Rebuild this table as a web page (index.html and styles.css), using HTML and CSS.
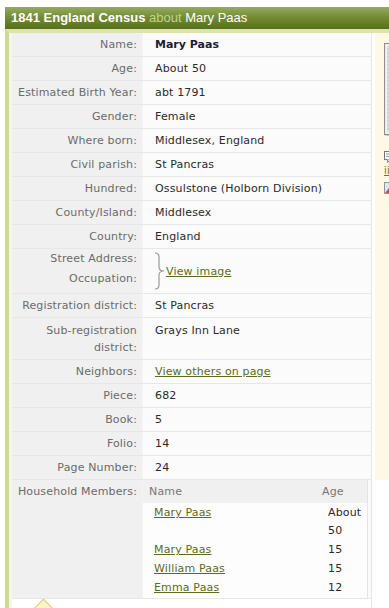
FILE: index.html
```html
<!DOCTYPE html>
<html>
<head>
<meta charset="utf-8">
<link rel="stylesheet" href="styles.css">
</head>
<body>
<div class="page">
  <div class="hdr"><b>1841 England Census</b> <span class="about">about</span> Mary Paas</div>
  <div class="frame">
    <div class="main">
      <div class="rec">
        <div class="row"><div class="lbl">Name:</div><div class="val"><strong>Mary Paas</strong></div></div>
        <div class="row"><div class="lbl">Age:</div><div class="val">About 50</div></div>
        <div class="row"><div class="lbl">Estimated Birth Year:</div><div class="val">abt 1791</div></div>
        <div class="row"><div class="lbl">Gender:</div><div class="val">Female</div></div>
        <div class="row"><div class="lbl">Where born:</div><div class="val">Middlesex, England</div></div>
        <div class="row"><div class="lbl">Civil parish:</div><div class="val">St Pancras</div></div>
        <div class="row"><div class="lbl">Hundred:</div><div class="val">Ossulstone (Holborn Division)</div></div>
        <div class="row"><div class="lbl">County/Island:</div><div class="val">Middlesex</div></div>
        <div class="row"><div class="lbl">Country:</div><div class="val">England</div></div>
        <div class="row row-img">
          <div class="lbl lbl-pair"><div>Street Address:</div><div>Occupation:</div></div>
          <div class="val val-img">
            <svg class="brace" width="11" height="38" viewBox="0 0 11 38"><path d="M1 1 Q5 1 5 5 L5 15 Q5 19 10 19 Q5 19 5 23 L5 33 Q5 37 1 37" fill="none" stroke="#9a9a9a" stroke-width="1.2"/></svg>
            <a href="#" class="lnk">View image</a>
          </div>
        </div>
        <div class="row"><div class="lbl">Registration district:</div><div class="val">St Pancras</div></div>
        <div class="row row-two"><div class="lbl">Sub-registration district:</div><div class="val">Grays Inn Lane</div></div>
        <div class="row"><div class="lbl">Neighbors:</div><div class="val"><a href="#" class="lnk">View others on page</a></div></div>
        <div class="row"><div class="lbl">Piece:</div><div class="val">682</div></div>
        <div class="row"><div class="lbl">Book:</div><div class="val">5</div></div>
        <div class="row"><div class="lbl">Folio:</div><div class="val">14</div></div>
        <div class="row"><div class="lbl">Page Number:</div><div class="val">24</div></div>
        <div class="row row-hh">
          <div class="lbl">Household Members:</div>
          <div class="val val-hh">
            <div class="hh">
              <div class="hh-head"><span class="c-name">Name</span><span class="c-age">Age</span></div>
              <div class="hh-body">
                <div class="hh-row"><a href="#" class="lnk c-name">Mary Paas</a><span class="c-age">About 50</span></div>
                <div class="hh-row"><a href="#" class="lnk c-name">Mary Paas</a><span class="c-age">15</span></div>
                <div class="hh-row"><a href="#" class="lnk c-name">William Paas</a><span class="c-age">15</span></div>
                <div class="hh-row"><a href="#" class="lnk c-name">Emma Paas</a><span class="c-age">12</span></div>
              </div>
            </div>
          </div>
        </div>
      </div>
      <div class="foot"><span class="diamond"></span></div>
    </div>
    <aside class="side">
      <div class="thumb"><div class="thumb-in"></div></div>
      <div class="side-icons">
        <svg class="ic-comment" width="12" height="12" viewBox="0 0 12 12"><rect x="0.5" y="0.5" width="11" height="8" fill="#fff" stroke="#777"/><path d="M3 8.5 L4 11.5 L6 8.5" fill="#fff" stroke="#777"/><line x1="2" y1="3" x2="10" y2="3" stroke="#999"/><line x1="2" y1="5.5" x2="9" y2="5.5" stroke="#999"/></svg>
        <a href="#" class="lnk side-lnk">ii</a>
        <svg class="ic-img" width="12" height="12" viewBox="0 0 12 12"><rect x="0.5" y="0.5" width="11" height="11" fill="#dfe7f3" stroke="#8a96a8"/><path d="M1 11 L5 6 L8 9 L11 7 L11 11 Z" fill="#c05050"/></svg>
      </div>
    </aside>
  </div>
</div>
</body>
</html>
```

FILE: styles.css
```css
html, body {
  margin: 0;
  padding: 0;
  background: #ffffff;
  overflow: hidden;
}
body {
  font-family: "DejaVu Sans", Verdana, sans-serif;
  font-size: 11px;
  letter-spacing: 0.15px;
  color: #2a2a2a;
}
.page {
  padding-top: 7px;
  width: 389px;
  overflow: hidden;
}
.hdr {
  margin-left: 5px;
  height: 22px;
  line-height: 22px;
  padding-left: 6px;
  font-family: "Liberation Sans", Arial, sans-serif;
  font-size: 13px;
  letter-spacing: 0;
  color: #ffffff;
  white-space: nowrap;
  background: linear-gradient(to bottom, #97aa5e 0%, #748d34 45%, #56701b 100%);
}
.hdr b { font-weight: bold; }
.about { color: #c3d384; }
.frame {
  margin-left: 5px;
  display: flex;
  align-items: flex-start;
  border-left: 4px solid #cfd997;
  border-top: 4px solid #dce3ae;
}
.main {
  flex: none;
  width: 359px;
  padding-left: 3px;
  background: linear-gradient(to right, #f5f6ea 0, #f5f6ea 3px, #ffffff 3px);
  border-right: 1px solid #e6e6e6;
}
.rec {
  width: 359px;
}
.row {
  display: grid;
  grid-template-columns: 130px 1fr;
  border-bottom: 1px solid #e7e7e7;
}
.lbl {
  background: #f0f0f0;
  color: #6b6b6b;
  text-align: right;
  padding: 3px 5px 3px 0;
  line-height: 17px;
}
.val {
  background: #fbfbfb;
  padding: 3px 0 3px 12px;
  line-height: 17px;
  border-left: 1px solid #f4f4f4;
}
.val strong {
  color: #1c1c34;
  font-weight: bold;
  letter-spacing: 0;
}
.lnk {
  color: #5d6b22;
  text-decoration: underline;
}
.row-img .lbl-pair {
  padding-top: 0;
  padding-bottom: 1px;
  line-height: 20px;
}
.val-img {
  display: flex;
  align-items: center;
  padding-left: 11px;
}
.brace {
  display: block;
  margin-right: 1px;
}
.row-two .lbl,
.row-two .val {
  padding-top: 4px;
  padding-bottom: 3px;
}
.row-hh .lbl {
  padding-bottom: 0;
}
.val-hh {
  padding: 0 3px 0 0;
  background: #fbfbfb;
}
.hh {
  display: flex;
  flex-direction: column;
  border-right: 1px solid #e4e4e4;
}
.hh-head {
  display: grid;
  grid-template-columns: 1fr 50px;
  background: #f0f0f0;
  color: #777777;
  padding: 3px 0;
  line-height: 17px;
}
.hh-head .c-name { padding-left: 6px; }
.hh-head .c-age { padding-left: 5px; }
.hh-body {
  padding-top: 1px;
  background: #fdfdfd;
}
.hh-row {
  display: grid;
  grid-template-columns: 1fr 50px;
  line-height: 18px;
  padding-bottom: 1px;
  align-items: start;
}
.hh-row .c-name { padding-left: 11px; justify-self: start; }
.hh-row .c-age { padding-left: 11px; }
.foot {
  height: 30px;
  padding-left: 23px;
  background: #ffffff;
}
.diamond {
  display: block;
  width: 15px;
  height: 15px;
  margin-top: 3px;
  background: #fbf5c4;
  border: 1px solid #d9cd8a;
  transform: rotate(45deg);
}
.side {
  flex: none;
  width: 14px;
  overflow: hidden;
  margin-left: 3px;
  height: 447px;
  background: #fdf9e5;
  padding: 10px 0 0 9px;
  box-sizing: border-box;
}
.thumb {
  width: 80px;
  height: 86px;
  border: 1px solid #8c8c8c;
  background: #efefef;
  padding: 2px;
  box-sizing: content-box;
  box-shadow: 1px 1px 0 #c9c9c9;
}
.thumb-in {
  width: 100%;
  height: 100%;
  background: repeating-linear-gradient(to bottom, #dedede 0, #dedede 2px, #d2d2d2 2px, #d2d2d2 4px);
}
.side-icons {
  display: flex;
  flex-direction: column;
  align-items: flex-start;
  gap: 2px;
  padding-top: 16px;
}
.side-icons svg { display: block; flex: none; }
.side-lnk {
  font-size: 10px;
  line-height: 12px;
  color: #8a6d10;
}
.ic-img { margin-top: 3px; }
```
